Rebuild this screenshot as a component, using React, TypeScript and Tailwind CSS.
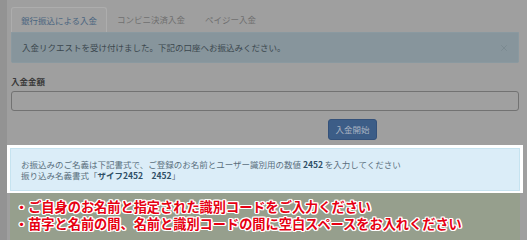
import { X } from "lucide-react";

const jp = { fontFamily: '"Noto Sans CJK JP", "Noto Sans", sans-serif' };

const tabs = ["銀行振込による入金", "コンビニ決済入金", "ペイジー入金"];

const notes = [
  "・ご自身のお名前と指定された識別コードをご入力ください",
  "・苗字と名前の間、名前と識別コードの間に空白スペースをお入れください",
];

export default function App() {
  return (
    <div
      className="flex h-[240px] w-[527px] overflow-hidden bg-[#9f9f9f] text-[8.5px] leading-none"
      style={jp}
    >
      <div className="w-[7px] shrink-0 bg-[#939393]" />
      <div className="flex min-w-0 flex-1 flex-col">
        {/* dimmed form */}
        <div className="flex flex-col pl-[4px] pr-[8px] pt-[7px]">
          <div className="flex h-[25px] items-stretch">
            {tabs.map((t, i) => (
              <div
                key={t}
                className={
                  i === 0
                    ? "flex w-[96px] items-center justify-center rounded-t-[3px] border border-b-0 border-[#adadad] bg-[#a1a1a1] text-[#4a6580]"
                    : "flex items-center px-[10px] text-[#6f6f6f]"
                }
              >
                {t}
              </div>
            ))}
          </div>
          <div className="flex h-[31px] items-center justify-between rounded-b-[2px] border border-[#8a99a0] bg-[#87959c] pl-[10px] pr-[9px] text-[#3b474e]">
            <span>入金リクエストを受け付けました。下記の口座へお振込みください。</span>
            <X className="h-[10px] w-[10px] text-[#74838a]" strokeWidth={1.5} />
          </div>
          <div className="mt-[14px] font-bold text-[#3a3a3a]">入金金額</div>
          <div className="mt-[5px] h-[20px] rounded-[3px] border border-[#727272] bg-[#a0a0a0]" />
          <div className="mt-[8px] flex justify-end pr-[142px]">
            <div className="flex h-[21px] w-[49px] items-center justify-center rounded-[3px] border border-[#34517a] bg-[#3c5d87] text-[#aab4c2]">
              入金開始
            </div>
          </div>
        </div>

        {/* highlighted note */}
        <div className="mt-[5px] w-[516px] bg-white p-[3px] pb-[2px]">
          <div className="flex h-[43px] flex-col justify-center gap-[3px] border border-[#c6e3f0] bg-[#dbedf8] pl-[10px] pt-[1px] text-[#5a6f7d]">
            <div>
              お振込みのご名義は下記書式で、ご登録のお名前とユーザー識別用の数値{" "}
              <b className="text-[#2f4f66]">2452</b> を入力してください
            </div>
            <div>
              振り込み名義書式「<b className="text-[#2f4f66]">ザイフ2452　2452</b>」
            </div>
          </div>
        </div>

        {/* red instructions */}
        <div className="ml-[3px] flex w-[510px] flex-1 flex-col gap-[1px] bg-[#969f8d] pl-[5px] pt-[7px]">
          {notes.map((n) => (
            <div
              key={n}
              className="text-[13.2px] font-bold leading-[16px] text-[#e60012]"
              style={{
                fontFamily: '"Liberation Sans", "Noto Sans CJK JP", sans-serif',
                textShadow:
                  "1px 0 0 #fff, -1px 0 0 #fff, 0 1px 0 #fff, 0 -1px 0 #fff, 1px 1px 0 #fff, -1px -1px 0 #fff, 1px -1px 0 #fff, -1px 1px 0 #fff, 1.5px 0 0.5px #fff, -1.5px 0 0.5px #fff",
              }}
            >
              {n}
            </div>
          ))}
        </div>
      </div>
    </div>
  );
}
